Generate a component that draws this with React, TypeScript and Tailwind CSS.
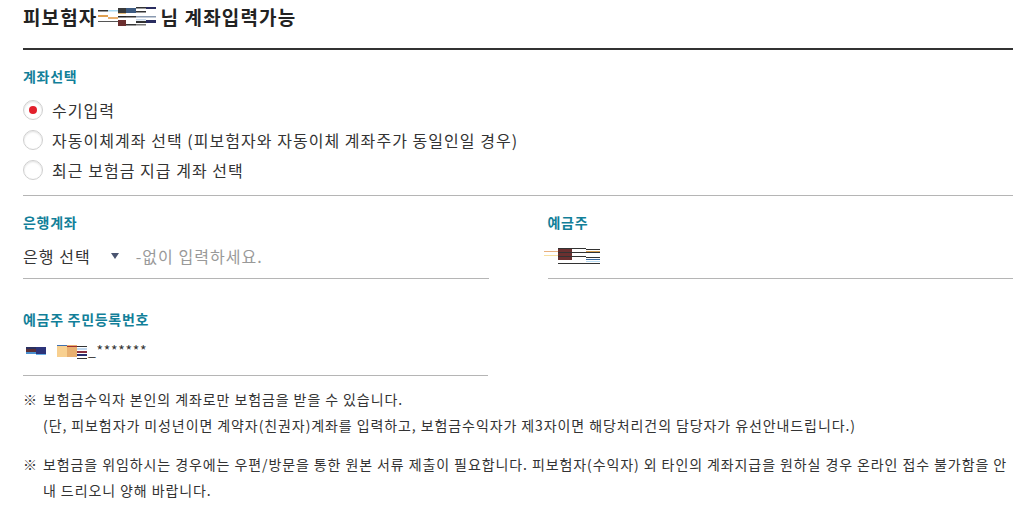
import React from "react";

const TitleMask = () => (
  <svg width="60" height="20" viewBox="0 0 60 20" className="inline-block align-middle ml-[1px] mr-[2px]">
    <rect x="0" y="3" width="10" height="1.5" fill="#333" />
    <rect x="10" y="3" width="10" height="1.5" fill="#a8d8f0" />
    <rect x="0" y="8" width="10" height="2" fill="#e0a050" />
    <rect x="10" y="10" width="10" height="2" fill="#e8b070" />
    <rect x="0" y="14" width="20" height="1" fill="#555" />
    <rect x="20" y="1" width="8" height="5" fill="#3a3a3a" />
    <rect x="20" y="6" width="8" height="1" fill="#e8c080" />
    <rect x="20" y="9" width="8" height="1.5" fill="#222" />
    <rect x="20" y="13" width="8" height="6" fill="#6b2e2e" />
    <rect x="28" y="1" width="10" height="5" fill="#3c5a80" />
    <rect x="28" y="9" width="10" height="1.5" fill="#333" />
    <rect x="28" y="17" width="10" height="1.5" fill="#333" />
    <rect x="38" y="0" width="10" height="1.5" fill="#333" />
    <rect x="38" y="4" width="10" height="1.5" fill="#333" />
    <rect x="48" y="0" width="10" height="2" fill="#2a2d60" />
    <rect x="38" y="9" width="20" height="1.5" fill="#8a9ab0" />
    <rect x="38" y="12" width="10" height="1.5" fill="#c8d8e8" />
    <rect x="38" y="14" width="10" height="2" fill="#333" />
    <rect x="48" y="13" width="10" height="3" fill="#2a2d60" />
    <rect x="38" y="17" width="10" height="1.5" fill="#777" />
  </svg>
);

const OwnerMask = () => (
  <svg width="56" height="17" viewBox="0 0 56 17" className="inline-block align-middle -ml-[4px]">
    <rect x="0" y="3" width="14" height="1" fill="#e8b080" />
    <rect x="0" y="7" width="14" height="1" fill="#f8e0a0" />
    <rect x="14" y="0" width="14" height="12" fill="#6b3030" />
    <rect x="14" y="0" width="28" height="1" fill="#333" />
    <rect x="14" y="4" width="28" height="1" fill="#333" />
    <rect x="14" y="8" width="28" height="1" fill="#333" />
    <rect x="14" y="15" width="28" height="1" fill="#333" />
    <rect x="42" y="1" width="14" height="1" fill="#333" />
    <rect x="42" y="3" width="14" height="1" fill="#d8a050" />
    <rect x="42" y="4" width="14" height="1" fill="#333" />
    <rect x="42" y="9" width="14" height="1" fill="#333" />
    <rect x="42" y="11" width="14" height="1" fill="#3a6aa0" />
    <rect x="42" y="13" width="14" height="1" fill="#b8dcf4" />
    <rect x="42" y="15" width="14" height="1" fill="#333" />
  </svg>
);

const IdMask = () => (
  <svg width="62" height="14" viewBox="0 0 62 14" className="inline-block align-middle">
    <rect x="0" y="2" width="10" height="2" fill="#2a3060" />
    <rect x="0" y="4" width="10" height="3" fill="#5a3038" />
    <rect x="0" y="7" width="10" height="2" fill="#4a90d0" />
    <rect x="10" y="2" width="10" height="8" fill="#2c347a" />
    <rect x="10" y="9" width="10" height="1" fill="#6ab0e8" />
    <rect x="31" y="0" width="10" height="12" fill="#f8d090" />
    <rect x="31" y="0" width="10" height="1" fill="#4070b0" />
    <rect x="41" y="0" width="10" height="12" fill="#e8b070" />
    <rect x="41" y="1" width="10" height="1" fill="#a03030" />
    <rect x="51" y="1" width="10" height="1" fill="#333" />
    <rect x="51" y="3" width="10" height="2" fill="#c0d8f0" />
    <rect x="51" y="6" width="10" height="2" fill="#8a3040" />
    <rect x="51" y="9" width="10" height="2" fill="#2a3070" />
    <rect x="51" y="13" width="10" height="1" fill="#333" />
  </svg>
);

function Radio({ checked, label }: { checked?: boolean; label: string }) {
  return (
    <label className="flex items-center h-[30px] gap-[9px]">
      <span className="w-[20px] h-[20px] rounded-full border border-[#cfcfcf] bg-white shadow-[inset_0_1px_2px_rgba(0,0,0,0.12)] flex items-center justify-center">
        {checked && <span className="w-[8px] h-[8px] rounded-full bg-[#e2202c]" />}
      </span>
      <span className="text-[16px] text-[#333] tracking-[0.065em]">{label}</span>
    </label>
  );
}

const labelCls = "text-[14px] leading-[20px] font-bold text-[#127f99] tracking-[0.05em]";

export default function App() {
  return (
    <div className="w-[1013px] h-[516px] bg-white text-[#222] font-['Noto_Sans_CJK_KR','Noto_Sans',sans-serif] pl-[23px] overflow-hidden">
      <h1 className="h-[34px] flex items-center text-[19px] font-bold text-[#222] tracking-[0.06em]">
        피보험자<TitleMask />님 계좌입력가능
      </h1>
      <div className="mt-[14px] h-[2px] bg-[#333]" />

      <div className={`mt-[16px] ${labelCls}`}>계좌선택</div>
      <div className="mt-[9px] flex flex-col">
        <Radio checked label="수기입력" />
        <Radio label="자동이체계좌 선택 (피보험자와 자동이체 계좌주가 동일인일 경우)" />
        <Radio label="최근 보험금 지급 계좌 선택" />
      </div>
      <div className="mt-[10px] h-px bg-[#b5b5b5]" />

      <div className="grid grid-cols-2 gap-x-[59px]">
        <div>
          <div className={`mt-[16px] ${labelCls}`}>은행계좌</div>
          <div className="mt-[8px] h-[39px] pb-[6px] flex items-center border-b border-[#b5b5b5] tracking-[0.065em]">
            <span className="text-[16px] text-[#333]">은행 선택</span>
            <span className="ml-[20px] w-0 h-0 border-l-[4.5px] border-r-[4.5px] border-t-[6px] border-l-transparent border-r-transparent border-t-[#4a5470]" />
            <span className="ml-[17px] text-[16px] text-[#999]">-없이 입력하세요.</span>
          </div>
        </div>
        <div>
          <div className={`mt-[16px] ${labelCls}`}>예금주</div>
          <div className="mt-[8px] h-[39px] pb-[6px] flex items-center border-b border-[#b5b5b5]">
            <OwnerMask />
          </div>
        </div>
      </div>

      <div className="w-[465px]">
        <div className={`mt-[30px] ${labelCls}`}>예금주 주민등록번호</div>
        <div className="mt-[11px] pb-[14px] h-[36px] flex items-center border-b border-[#b5b5b5] text-[14px] text-[#333] tracking-[0.05em]">
          <span className="ml-[3px]"><IdMask /></span>
          <span>_*******</span>
        </div>
      </div>

      <div className="mt-[10px] pr-[4px] text-[14px] leading-[26px] text-[#333] tracking-[0.065em]">
        <div className="flex">
          <span className="w-[20px] shrink-0">※</span>
          <p>
            보험금수익자 본인의 계좌로만 보험금을 받을 수 있습니다.
            <br />
            (단, 피보험자가 미성년이면 계약자(친권자)계좌를 입력하고, 보험금수익자가 제3자이면 해당처리건의 담당자가 유선안내드립니다.)
          </p>
        </div>
        <div className="flex mt-[13px]">
          <span className="w-[20px] shrink-0">※</span>
          <p>
            보험금을 위임하시는 경우에는 우편/방문을 통한 원본 서류 제출이 필요합니다. 피보험자(수익자) 외 타인의 계좌지급을 원하실 경우 온라인 접수 불가함을 안내 드리오니 양해 바랍니다.
          </p>
        </div>
      </div>
    </div>
  );
}
